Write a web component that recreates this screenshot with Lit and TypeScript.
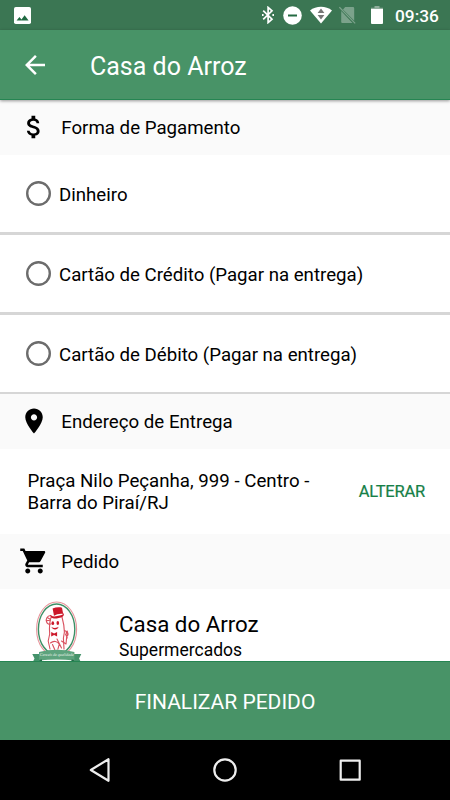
import { LitElement, html, css, svg } from "lit";
import { customElement, property } from "lit/decorators.js";

const paths: Record<string, string> = {
  money:
    "M11.8 10.9c-2.27-.59-3-1.2-3-2.15 0-1.09 1.01-1.85 2.7-1.85 1.78 0 2.44.85 2.5 2.1h2.21c-.07-1.72-1.12-3.3-3.21-3.81V3h-3v2.16c-1.94.42-3.5 1.68-3.5 3.61 0 2.31 1.91 3.46 4.7 4.13 2.5.6 3 1.48 3 2.41 0 .69-.49 1.79-2.7 1.79-2.06 0-2.87-.92-2.98-2.1h-2.2c.12 2.19 1.76 3.42 3.68 3.83V21h3v-2.15c1.95-.37 3.5-1.5 3.5-3.55 0-2.84-2.43-3.81-4.7-4.4z",
  place:
    "M12 2C8.13 2 5 5.13 5 9c0 5.25 7 13 7 13s7-7.75 7-13c0-3.87-3.13-7-7-7zm0 9.5c-1.38 0-2.5-1.12-2.5-2.5s1.12-2.5 2.5-2.5 2.5 1.12 2.5 2.5-1.12 2.5-2.5 2.5z",
  cart:
    "M7 18c-1.1 0-1.99.9-1.99 2S5.9 22 7 22s2-.9 2-2-.9-2-2-2zM1 2v2h2l3.6 7.59-1.35 2.45c-.16.28-.25.61-.25.96 0 1.1.9 2 2 2h12v-2H7.42c-.14 0-.25-.11-.25-.25l.03-.12.9-1.63h7.45c.75 0 1.41-.41 1.75-1.03l3.58-6.49c.08-.14.12-.31.12-.48 0-.55-.45-1-1-1H5.21l-.94-2H1zm16 16c-1.1 0-1.99.9-1.99 2s.89 2 1.99 2 2-.9 2-2-.9-2-2-2z",
  back: "M20 11H7.83l5.59-5.59L12 4l-8 8 8 8 1.41-1.41L7.83 13H20v-2z",
};

@customElement("md-icon")
export class MdIcon extends LitElement {
  @property() name = "";
  static styles = css`
    :host { display: block; width: 30px; height: 30px; flex: none; }
    svg { display: block; width: 100%; height: 100%; fill: currentColor; }
  `;
  render() {
    return html`<svg viewBox="0 0 24 24"><path d=${paths[this.name]}></path></svg>`;
  }
}

@customElement("status-bar")
export class StatusBar extends LitElement {
  static styles = css`
    :host {
      display: flex; align-items: center; box-sizing: border-box; flex: none;
      height: 30px; padding: 0 10px 0 14px; background: #3b7653; color: #fff;
    }
    svg { display: block; flex: none; }
    .grow { flex: 1; }
    .bt { margin-right: 9px; }
    .dnd { margin-right: 8px; }
    .wifi { margin-right: 7px; }
    .sim { margin-right: 15px; }
    .battery { margin-right: 12px; }
    .time { font: 500 17.3px/30px Roboto, sans-serif; width: 45px; white-space: nowrap; padding-top: 1px; }
  `;
  render() {
    return html`
      <svg width="17" height="17" viewBox="0 0 17 17">
        <rect width="17" height="17" rx="1.8" fill="#fff"></rect>
        <path d="M2.6 13.5 5.4 10l2.1 2.4L10.6 8.2l4 5.3z" fill="#1f6a41"></path>
      </svg>
      <div class="grow"></div>
      <svg class="bt" width="12" height="18" viewBox="0 0 12 18" fill="none" stroke="#fff" stroke-width="1.7">
        <path d="M1.2 4.6 10 13.2 6.1 16.6V1.4L10 4.8 1.2 13.4"></path>
        <path d="M0 9h1.6M10.4 9H12" stroke-width="2"></path>
      </svg>
      <svg class="dnd" width="19" height="19" viewBox="0 0 19 19">
        <circle cx="9.5" cy="9.5" r="9.3" fill="#fff"></circle>
        <rect x="5" y="8.5" width="9" height="2" fill="#246b43"></rect>
      </svg>
      <svg class="wifi" width="22" height="18" viewBox="0 0 22 18">
        <path d="M11 17.6 0 4.4C6 -.6 16 -.6 22 4.4z" fill="#fff"></path>
        <path d="M11 2.4 14.4 7H7.6zM7.6 9h6.8L11 13.4z" fill="#777"></path>
      </svg>
      <svg class="sim" width="17" height="18" viewBox="0 0 17 18">
        <path d="M6.2 1H14q1.2 0 1.2 1.2v12.6L4 3.4zM2.2 5 13.5 17H3.2q-1 0-1-1z" fill="#7ba28b"></path>
        <path d="M.4 1.2 16.2 17.4" stroke="#7ba28b" stroke-width="1.2"></path>
      </svg>
      <svg class="battery" width="12" height="18" viewBox="0 0 12 18">
        <path d="M3.5 0h5v1.7H12V4H0V1.7h3.5z" fill="#8fae9b"></path>
        <path d="M0 3h12v14q0 1-1 1H1q-1 0-1-1z" fill="#fff"></path>
      </svg>
      <div class="time">09:36</div>
    `;
  }
}

@customElement("section-title")
export class SectionTitle extends LitElement {
  @property() icon = "";
  @property() label = "";
  static styles = css`
    :host {
      display: flex; align-items: center; flex: none; box-sizing: border-box;
      height: 55px; padding-left: 18.5px; gap: 12.8px; background: #fafafa; color: #000;
      font: 18.7px/22px Roboto, sans-serif;
    }
    md-icon { margin-bottom: 1px; }
    .label { padding-top: 1px; white-space: nowrap; }
  `;
  render() {
    return html`<md-icon .name=${this.icon}></md-icon><div class="label">${this.label}</div>`;
  }
}

@customElement("store-logo")
export class StoreLogo extends LitElement {
  static styles = css`
    :host { display: block; width: 50px; height: 66px; flex: none; }
    svg { display: block; overflow: visible; }
    .motto { font: italic 4px "Liberation Serif", serif; }
  `;
  render() {
    return html`
      <svg width="50" height="66" viewBox="0 0 50 66">
        <ellipse cx="24.6" cy="28.2" rx="20" ry="27.2" fill="#fff" stroke="#e8959c" stroke-width="1.1"></ellipse>
        <ellipse cx="24.6" cy="28.2" rx="18.2" ry="25.2" fill="#fffdfd" stroke="#3c8f65" stroke-width="1.4"></ellipse>
        ${svg`
          <g fill="none" stroke="#d9505e" stroke-width="1.1" stroke-linecap="round" stroke-linejoin="round">
            <path d="M19.5 15c-2 5-2.4 11-1.8 18l-1.5 7 1.8 8M30 16c1.4 5 2.3 10 2.4 15l-1 6 .6 11"></path>
            <path d="M18.6 14.5c-3.4.3-5.2 3.3-4 6.5.7 2.2 2.8 2.8 4.2 1.9M15.2 16.5l3 1.8M14.8 19.6l3.3-.3"></path>
            <path d="M32.5 29.5c3.2.4 4.9 4.2 2.2 6L34 43l-4.5-3M33.5 33l1.8 4"></path>
            <path d="M34 30.5l1.3 3.5 0-4M18.5 42c3-2.6 7-2 8.8 1.2l-1.4 5M20.5 43.5l2.2 5M25 38l4.5 9"></path>
          </g>
          <g fill="#cc1729">
            <path d="M20.6 7.4c2.8-1 6.4-1.4 9.4-.7l1.2 6.2c-3.4-.5-6.6.2-9.2 1.9z"></path>
            <path d="M18.2 13.7c1 1.5 3.7 2.3 7 1.3 3.6-.6 6.4-1.3 6.4-3.3 1.2 3.2-1.5 5-4.9 5.2-3.3.8-8.3 1.5-8.5-3.2z"></path>
            <ellipse cx="20.8" cy="22.2" rx="1.3" ry="1.9"></ellipse>
            <ellipse cx="25.8" cy="22" rx="1.3" ry="1.9"></ellipse>
            <path d="M19.4 26c2 1.3 5.5 1.3 7.2-.2-.5 3.2-6 3.6-7.2.2z"></path>
            <path d="m19.2 31 2.9 1.4 3-1.4v4.4l-3-1.4-2.9 1.4z"></path>
          </g>
        `}
        <path d="M.3 53H10v9H.3l2.2-4.4zM49.3 53h-9.7v9h9.7l-2.2-4.4z" fill="#45936b"></path>
        <path d="M7 51Q24.8 46.4 42.4 51v8.4Q24.8 57.6 7 59.4z" fill="#5da37d"></path>
        <path d="M7 59 10 62v-3.5zM42.4 59l-2.8 3v-3.5z" fill="#236b48"></path>
        <text class="motto" x="24.8" y="55.2" text-anchor="middle" fill="#e4f0e8">Cereais de qualidade</text>
      </svg>
    `;
  }
}

@customElement("app-root")
export class AppRoot extends LitElement {
  private options = ["Dinheiro", "Cartão de Crédito (Pagar na entrega)", "Cartão de Débito (Pagar na entrega)"];

  static styles = css`
    :host {
      display: flex; flex-direction: column; width: 450px; height: 800px; overflow: hidden;
      background: #fff; color: #000; font-family: Roboto, sans-serif;
    }
    .bar {
      display: flex; align-items: center; box-sizing: border-box; flex: none; height: 70px;
      padding-left: 20px; gap: 40px; background: #489367; color: #fff;
      border-bottom: 1px solid #258552; box-shadow: 0 1px 3px rgba(0, 0, 0, 0.4); z-index: 1;
    }
    .bar h1 { margin: 0; padding-top: 4px; font-size: 25px; line-height: 30px; font-weight: 400; }
    .content { flex: 1; min-height: 0; overflow: hidden; display: flex; flex-direction: column; }
    .option {
      display: flex; align-items: center; box-sizing: border-box; flex: none; height: 80px;
      padding-left: 26px; gap: 8px; border-bottom: 3px solid #d6d6d6; font-size: 18.65px;
    }
    .option:nth-of-type(3) { height: 79px; border-bottom-width: 2px; }
    .radio { width: 25px; height: 25px; border-radius: 50%; box-shadow: inset 0 0 0 2.4px #6c6c6c; }
    .option-label { padding-top: 3px; white-space: nowrap; }
    .address {
      display: flex; align-items: center; justify-content: space-between; flex: none; height: 85px;
      padding: 0 25px 0 27.5px; font-size: 18.7px; line-height: 22px;
    }
    .address-text { padding-top: 1px; white-space: nowrap; }
    .change { font-size: 16.5px; letter-spacing: -0.2px; color: #168047; padding-top: 1px; -webkit-text-stroke: 0.2px #168047; }
    .store { display: flex; flex: none; padding: 12px 0 0 32px; gap: 37px; }
    .store-text { padding-top: 9px; white-space: nowrap; }
    .store-name { font-size: 22.3px; line-height: 28px; }
    .store-kind { font-size: 17.5px; line-height: 25px; }
    .finish {
      display: flex; align-items: center; justify-content: center; box-sizing: border-box; flex: none;
      height: 79px; background: #489367; border-top: 1px solid #258552; color: #fff; font-size: 21px;
      padding-top: 2px;
    }
    .nav {
      display: flex; align-items: center; justify-content: center; flex: none; height: 60px;
      background: #000; gap: 101px;
    }
    .nav svg { display: block; fill: none; stroke: #eee; stroke-width: 2.2; stroke-linejoin: round; }
  `;

  render() {
    return html`
      <status-bar></status-bar>
      <header class="bar"><md-icon .name=${"back"}></md-icon><h1>Casa do Arroz</h1></header>
      <main class="content">
        <section-title .icon=${"money"} .label=${"Forma de Pagamento"}></section-title>
        ${this.options.map(
          (o) => html`<div class="option"><span class="radio"></span><span class="option-label">${o}</span></div>`
        )}
        <section-title .icon=${"place"} .label=${"Endereço de Entrega"}></section-title>
        <div class="address">
          <div class="address-text">Praça Nilo Peçanha, 999 - Centro -<br />Barra do Piraí/RJ</div>
          <div class="change">ALTERAR</div>
        </div>
        <section-title .icon=${"cart"} .label=${"Pedido"}></section-title>
        <div class="store">
          <store-logo></store-logo>
          <div class="store-text">
            <div class="store-name">Casa do Arroz</div>
            <div class="store-kind">Supermercados</div>
          </div>
        </div>
      </main>
      <div class="finish">FINALIZAR PEDIDO</div>
      <nav class="nav">
        <svg width="24" height="26" viewBox="0 0 24 26"><path d="M20.5 2.2v21.6L2.8 13z"></path></svg>
        <svg width="24" height="24" viewBox="0 0 24 24"><circle cx="12" cy="12" r="10.7"></circle></svg>
        <svg width="24" height="24" viewBox="0 0 24 24"><rect x="2.7" y="2.7" width="19" height="19"></rect></svg>
      </nav>
    `;
  }
}
